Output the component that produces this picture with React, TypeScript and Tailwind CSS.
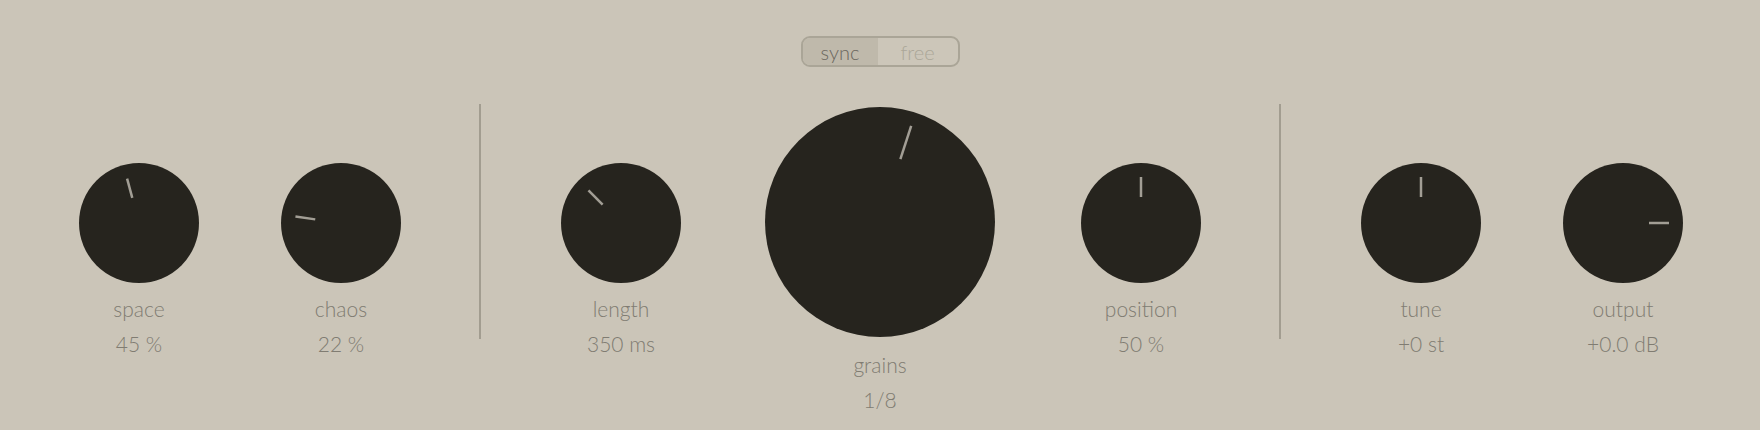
import React from 'react';

type KnobProps = {
  size: number;
  angle: number;
  rIn: number;
  rOut: number;
};

// Dark round knob with a thin pointer line, angle in degrees from 12 o'clock
const Knob: React.FC<KnobProps> = ({ size, angle, rIn, rOut }) => {
  const c = size / 2;
  return (
    <div className="rounded-full bg-[#26241e]" style={{ width: size, height: size }}>
      <svg width={size} height={size} viewBox={`0 0 ${size} ${size}`}>
        <line
          x1={c}
          y1={c - rIn}
          x2={c}
          y2={c - rOut}
          stroke="#a29e95"
          strokeWidth={2.5}
          strokeLinecap="butt"
          transform={`rotate(${angle} ${c} ${c})`}
        />
      </svg>
    </div>
  );
};

interface ControlProps {
  label: string;
  value: string;
  angle: number;
  big?: boolean;
}

const Control: React.FC<ControlProps> = ({ label, value, angle, big }) => (
  <div className={big ? 'flex flex-col items-center w-[230px] mt-[3px]' : 'flex flex-col items-center w-[120px] mt-[59px]'}>
    {big ? <Knob size={230} angle={angle} rIn={66} rOut={101} /> : <Knob size={120} angle={angle} rIn={26} rOut={46} />}
    <div className={big ? 'mt-[15px] text-[21px] leading-[26px] font-light text-[#807c72]' : 'mt-[13px] text-[21px] leading-[26px] font-light text-[#807c72]'}>
      {label}
    </div>
    <div className="mt-[9px] text-[21px] leading-[26px] font-light text-[#807c72]">{value}</div>
  </div>
);

const Divider = () => <div className="w-[2px] h-[235px] bg-[#a29d90]" />;

export default function App() {
  return (
    <div
      className="w-[1760px] h-[430px] bg-[#cbc5b8] overflow-hidden flex flex-col items-center pt-[36px]"
      style={{ fontFamily: 'Lato, "Noto Sans", sans-serif' }}
    >
      {/* sync / free toggle */}
      <div className="flex w-[159px] h-[31px] rounded-[9px] border-2 border-[#aaa597] bg-[#ccc6b9] overflow-hidden text-[20px] leading-none">
        <div className="w-[75px] flex items-center justify-center bg-[#bfb9ab] text-[#6b675e] font-light">sync</div>
        <div className="flex-1 flex items-center justify-center text-[#aba698] font-light">free</div>
      </div>

      {/* knob row */}
      <div className="mt-[37px] w-full flex items-start pl-[79px]">
        <div className="flex gap-[82px]">
          <Control label="space" value="45 %" angle={-15} />
          <Control label="chaos" value="22 %" angle={-82} />
        </div>
        <div className="ml-[78px] mr-[80px]">
          <Divider />
        </div>
        <div className="flex gap-[84px] items-start">
          <Control label="length" value="350 ms" angle={-45} />
          <Control label="grains" value="1/8" angle={18} big />
          <div className="ml-[2px]">
            <Control label="position" value="50 %" angle={0} />
          </div>
        </div>
        <div className="ml-[78px] mr-[80px]">
          <Divider />
        </div>
        <div className="flex gap-[82px]">
          <Control label="tune" value="+0 st" angle={0} />
          <Control label="output" value="+0.0 dB" angle={90} />
        </div>
      </div>
    </div>
  );
}
